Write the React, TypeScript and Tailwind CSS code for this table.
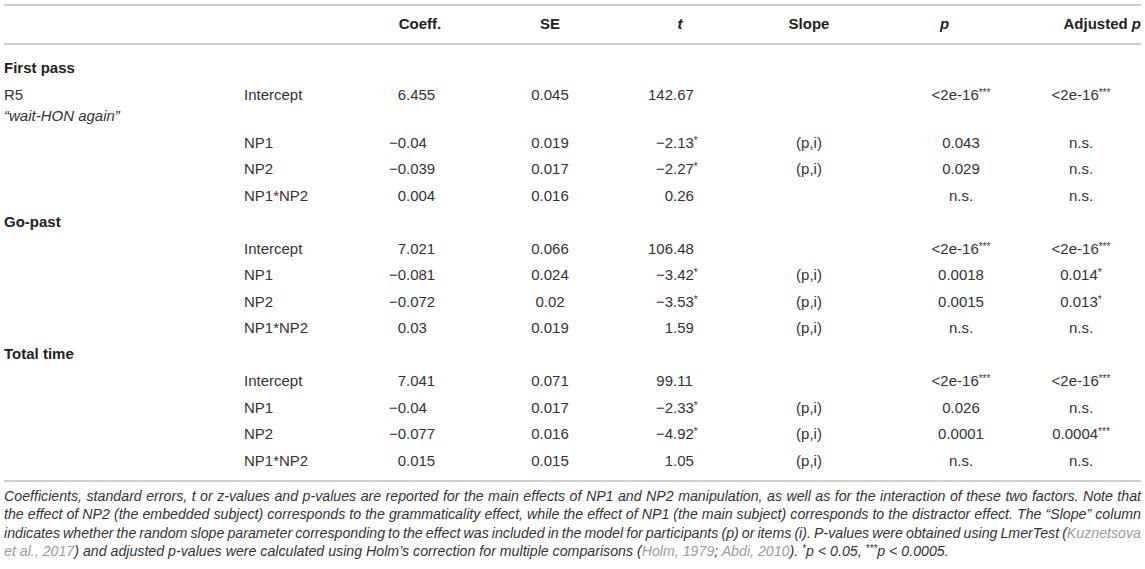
import React from "react";

type Line = {
  label?: string;
  sub?: string;
  term: string;
  coeff: string;
  se: string;
  t: string;
  slope: string;
  p: string;
  adj: string;
};

type Block = { title: string; rows: Line[] };

const blocks: Block[] = [
  {
    title: "First pass",
    rows: [
      { label: "R5", sub: "“wait-HON again”", term: "Intercept", coeff: "6.455", se: "0.045", t: "142.67", slope: "", p: "<2e-16***", adj: "<2e-16***" },
      { term: "NP1", coeff: "−0.04", se: "0.019", t: "−2.13*", slope: "(p,i)", p: "0.043", adj: "n.s." },
      { term: "NP2", coeff: "−0.039", se: "0.017", t: "−2.27*", slope: "(p,i)", p: "0.029", adj: "n.s." },
      { term: "NP1*NP2", coeff: "0.004", se: "0.016", t: "0.26", slope: "", p: "n.s.", adj: "n.s." },
    ],
  },
  {
    title: "Go-past",
    rows: [
      { term: "Intercept", coeff: "7.021", se: "0.066", t: "106.48", slope: "", p: "<2e-16***", adj: "<2e-16***" },
      { term: "NP1", coeff: "−0.081", se: "0.024", t: "−3.42*", slope: "(p,i)", p: "0.0018", adj: "0.014*" },
      { term: "NP2", coeff: "−0.072", se: "0.02", t: "−3.53*", slope: "(p,i)", p: "0.0015", adj: "0.013*" },
      { term: "NP1*NP2", coeff: "0.03", se: "0.019", t: "1.59", slope: "(p,i)", p: "n.s.", adj: "n.s." },
    ],
  },
  {
    title: "Total time",
    rows: [
      { term: "Intercept", coeff: "7.041", se: "0.071", t: "99.11", slope: "", p: "<2e-16***", adj: "<2e-16***" },
      { term: "NP1", coeff: "−0.04", se: "0.017", t: "−2.33*", slope: "(p,i)", p: "0.026", adj: "n.s." },
      { term: "NP2", coeff: "−0.077", se: "0.016", t: "−4.92*", slope: "(p,i)", p: "0.0001", adj: "0.0004***" },
      { term: "NP1*NP2", coeff: "0.015", se: "0.015", t: "1.05", slope: "(p,i)", p: "n.s.", adj: "n.s." },
    ],
  },
];

const cols = "grid grid-cols-[240px_126px_100px_160px_100px_158px_146px_107px]";

const Stars = ({ n }: { n: string }) => (
  <span className="text-[10px] leading-none align-[4px]">{n}</span>
);

// value with the significance stars set small and raised
const Val = ({ v }: { v: string }) => {
  const m = v.match(/^(.*?)(\*+)$/);
  if (!m) return <>{v}</>;
  return (
    <>
      {m[1]}
      <Stars n={m[2]} />
    </>
  );
};

// number lined up on its decimal point
const Dec = ({ v, w }: { v: string; w: string }) => {
  const i = v.indexOf(".");
  return (
    <div className="flex items-baseline whitespace-nowrap">
      <span className={`${w} shrink-0 text-right`}>{v.slice(0, i)}</span>
      <span>
        <Val v={v.slice(i)} />
      </span>
    </div>
  );
};

const Cite = ({ children }: { children: React.ReactNode }) => (
  <span className="text-[#9a9a9a]">{children}</span>
);

const just = "text-justify [text-align-last:justify] whitespace-nowrap [word-spacing:-1.5px]";

const App: React.FC = () => {
  return (
    <div className="w-[1145px] h-[569px] overflow-hidden bg-white font-['Liberation_Sans',Arial,sans-serif] text-[#333]">
      <div className="mx-[4px] mt-[4px] border-t-2 border-b-2 border-[#cdcdcd] text-[15px]">
        {/* header */}
        <div className={`${cols} h-[39px] items-center border-b-2 border-[#cdcdcd] font-bold text-[#222]`}>
          <div />
          <div />
          <div className="text-center">Coeff.</div>
          <div className="text-center">SE</div>
          <div className="text-center italic">t</div>
          <div className="text-center">Slope</div>
          <div className="pl-[52px] italic">p</div>
          <div className="text-right">
            Adjusted <span className="italic">p</span>
          </div>
        </div>

        <div className="pt-[10px] pb-[6px]">
          {blocks.map((b) => (
            <div key={b.title}>
              <div className="flex h-[26.5px] items-center font-bold text-[#222]">{b.title}</div>
              {b.rows.map((r, idx) => (
                <div
                  key={b.title + idx}
                  className={`${cols} ${r.sub ? "h-[47.5px] items-start pt-[4.5px]" : "h-[26.5px] items-center"}`}
                >
                  <div className="leading-[17.5px]">
                    {r.label}
                    {r.sub && <div className="mt-[3px] italic">{r.sub}</div>}
                  </div>
                  <div className="leading-[17.5px]">{r.term}</div>
                  <div className="leading-[17.5px]">
                    <Dec v={r.coeff} w="w-[36px]" />
                  </div>
                  <div className="text-center leading-[17.5px]">{r.se}</div>
                  <div className="leading-[17.5px]">
                    <Dec v={r.t} w="w-[43px]" />
                  </div>
                  <div className="text-center leading-[17.5px]">{r.slope}</div>
                  <div className="text-center leading-[17.5px] whitespace-nowrap">
                    <Val v={r.p} />
                  </div>
                  <div className="pr-[13px] text-center leading-[17.5px] whitespace-nowrap">
                    <Val v={r.adj} />
                  </div>
                </div>
              ))}
            </div>
          ))}
        </div>
      </div>

      <div className="mx-[4px] pt-[5px] text-[14.2px] italic leading-[18.5px] text-[#333]">
        <p className={just}>
          Coefficients, standard errors, t or z-values and p-values are reported for the main effects of NP1 and NP2 manipulation, as well as for the interaction of these two factors. Note that
        </p>
        <p className={just}>
          the effect of NP2 (the embedded subject) corresponds to the grammaticality effect, while the effect of NP1 (the main subject) corresponds to the distractor effect. The “Slope” column
        </p>
        <p className={just}>
          indicates whether the random slope parameter corresponding to the effect was included in the model for participants (p) or items (i). P-values were obtained using LmerTest (<Cite>Kuznetsova</Cite>
        </p>
        <p className="whitespace-nowrap">
          <Cite>et al., 2017</Cite>) and adjusted p-values were calculated using Holm’s correction for multiple comparisons (<Cite>Holm, 1979</Cite>; <Cite>Abdi, 2010</Cite>).{" "}
          <Stars n="*" />p &lt; 0.05, <Stars n="***" />p &lt; 0.0005.
        </p>
      </div>
    </div>
  );
};

export default App;
